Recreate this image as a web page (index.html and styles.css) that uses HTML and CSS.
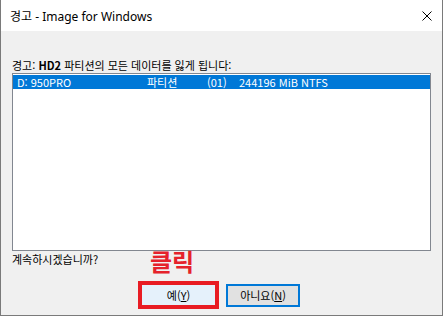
FILE: index.html
```html
<!DOCTYPE html>
<html lang="ko">
<head>
    <meta charset="UTF-8">
    <title>경고 - Image for Windows</title>
    <link rel="stylesheet" href="styles.css">
</head>
<body>

<div class="window">
    <div class="titlebar">
        <span class="title">경고 - Image for Windows</span>
        <svg class="close" width="10" height="10" viewBox="0 0 10 10">
            <path d="M0.5 0.5 L9.5 9.5 M9.5 0.5 L0.5 9.5" stroke="#000" stroke-width="1" fill="none"/>
        </svg>
    </div>

    <div class="content">
        <p class="warn">경고: <b>HD2</b> 파티션의 모든 데이터를 잃게 됩니다:</p>

        <div class="listbox">
            <div class="row selected">
                <span>D: 950PRO</span>
                <span>파티션</span>
                <span>(01)</span>
                <span>244196 MiB NTFS</span>
            </div>
        </div>

        <p class="ask">계속하시겠습니까?</p>

        <div class="buttons">
            <!-- annotation from the screenshot -->
            <span class="note">클릭</span>
            <button class="btn yes">예(<u>Y</u>)</button>
            <button class="btn no">아니요(<u>N</u>)</button>
        </div>
    </div>
</div>

</body>
</html>
```

FILE: styles.css
```css
body {
    margin: 0;
    font-family: "Noto Sans CJK KR", "Noto Sans", sans-serif;
    font-size: 11px;
    color: #000;
    background: #f0f0f0;
}
.window {
    width: 443px;
    height: 316px;
    box-sizing: border-box;
    border: 1px solid #7a7a7a;
    border-top: none;
    display: flex;
    flex-direction: column;
}
.titlebar {
    height: 31px;
    background: #fff;
    display: flex;
    align-items: center;
    justify-content: space-between;
    padding: 0 10px 0 9px;
    flex-shrink: 0;
}
.title {
    font-family: "Noto Sans", "Noto Sans CJK KR", sans-serif;
    font-size: 12px;
    color: #000;
}
.close {
    display: block;
}
.content {
    flex: 1;
    background: #f0f0f0;
    padding: 0 11px;
}
.warn {
    margin: 27px 0 1px;
    line-height: 14px;
}
.warn b {
    font-weight: bold;
}
.listbox {
    height: 175px;
    border: 1px solid #828790;
    background: #fff;
    padding: 1px 0 0;
}
.row {
    display: grid;
    grid-template-columns: 130px 60px 32px 1fr;
    height: 14px;
    line-height: 14px;
    padding-left: 4px;
}
.row.selected {
    background: #0078d7;
    color: #fff;
}
.ask {
    margin: 1px 0 0;
    line-height: 14px;
}
.buttons {
    position: relative;
    display: flex;
    align-items: center;
    padding-left: 126px;
    margin-top: 15px;
}
.note {
    position: absolute;
    left: 138px;
    top: -33px;
    font-size: 24px;
    line-height: 26px;
    font-weight: bold;
    color: #e5222b;
}
.btn {
    font-family: "Noto Sans CJK KR", sans-serif;
    font-size: 11px;
    color: #000;
    padding: 0;
    box-sizing: border-box;
}
.btn u {
    text-decoration: underline;
}
.yes {
    width: 81px;
    height: 28px;
    border: 4px solid #e81c24;
    background: #e5f1fb;
}
.no {
    width: 74px;
    height: 23px;
    margin-left: 7px;
    border: 2px solid #0078d7;
    background: #e1e1e1;
}
```
